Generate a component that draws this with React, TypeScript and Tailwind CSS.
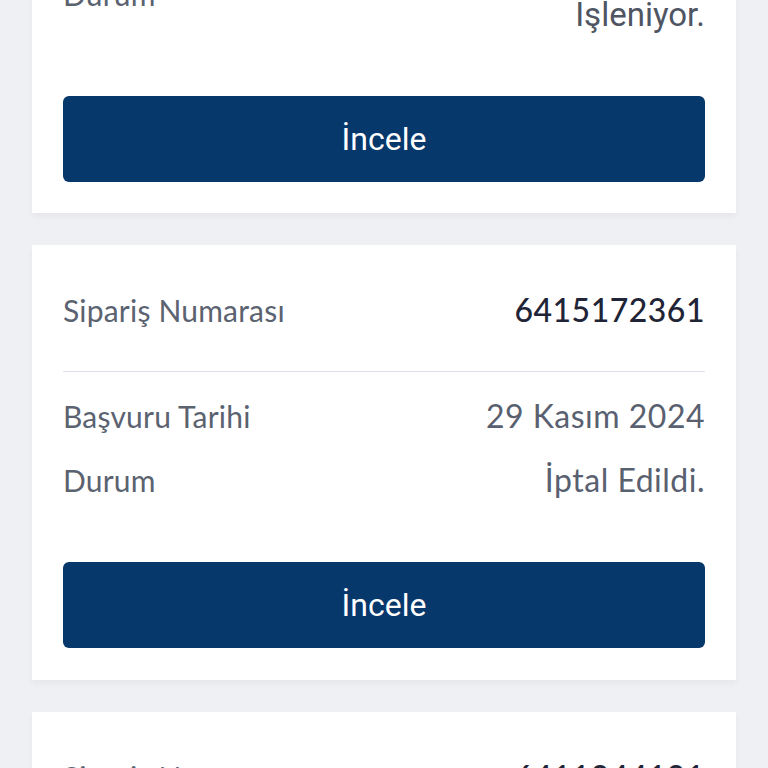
export default function App() {
  return (
    <div className="min-h-screen w-full overflow-hidden bg-[#eff0f4] px-8 font-['Lato',sans-serif]">
      <div className="flex flex-col gap-8">
        {/* partially scrolled card */}
        <div className="-mt-[65px] bg-white px-[31px] pb-[31px] pt-[33px] shadow-[0_4px_6px_rgba(0,0,0,0.04)]">
          <div className="flex items-start justify-between">
            <span className="mt-[6px] text-[30px] leading-[40px] tracking-[0.2px] text-[#5b6270]">Durum</span>
            <span className="mt-[27px] font-['Roboto',sans-serif] text-[33px] leading-[40px] text-[#4f5563]">
              Işleniyor.
            </span>
          </div>
          <button className="mt-[61px] flex h-[86px] w-full items-center justify-center rounded-md bg-[#07386c] font-['Roboto',sans-serif] text-[32px] text-white">
            İncele
          </button>
        </div>

        <OrderCard no="6415172361" date="29 Kasım 2024" status="İptal Edildi." />
        <OrderCard no="6411944191" date="28 Kasım 2024" status="Tamamlandı." />
      </div>
    </div>
  );
}

function OrderCard({ no, date, status }: { no: string; date: string; status: string }) {
  return (
    <div className="bg-white px-[31px] pb-8 pt-[33px] shadow-[0_4px_6px_rgba(0,0,0,0.04)]">
      <div className="flex h-16 items-center justify-between">
        <span className="text-[30px] tracking-[0.2px] text-[#5b6270]">Sipariş Numarası</span>
        <span className="text-[32px] font-medium tracking-[0.5px] text-[#1f2436]">{no}</span>
      </div>
      <div className="mt-[29px] h-px bg-[#dfe1e8]" />
      <div className="mt-6 flex h-10 items-center justify-between">
        <span className="text-[30px] tracking-[0.2px] text-[#5b6270]">Başvuru Tarihi</span>
        <span className="text-[32px] tracking-[0.5px] text-[#596070]">{date}</span>
      </div>
      <div className="mt-6 flex h-10 items-center justify-between">
        <span className="text-[30px] tracking-[0.2px] text-[#5b6270]">Durum</span>
        <span className="text-[32px] tracking-[0.5px] text-[#596070]">{status}</span>
      </div>
      <button className="mt-[62px] flex h-[86px] w-full items-center justify-center rounded-md bg-[#07386c] font-['Roboto',sans-serif] text-[32px] text-white">
        İncele
      </button>
    </div>
  );
}
